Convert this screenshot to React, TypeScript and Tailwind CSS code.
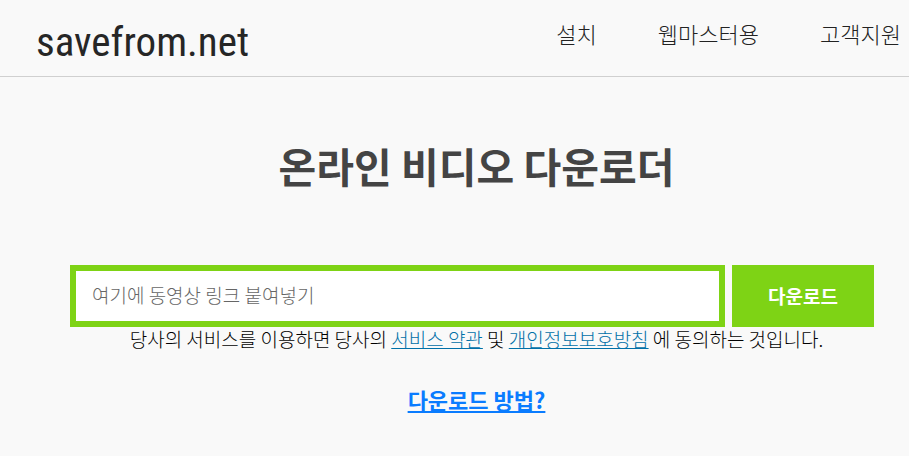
import { useState } from "react";

const menu = [
  { label: "설치", href: "#install" },
  { label: "웹마스터용", href: "#webmaster" },
  { label: "고객지원", href: "#support" },
];

function Header() {
  return (
    <header className="flex h-[77px] items-center justify-between border-b border-[#d0d0d0] pr-2 pl-9">
      <a
        href="#home"
        className="pt-2 font-['Roboto_Condensed','Liberation_Sans_Narrow',sans-serif] text-[41px] leading-none text-[#262626]"
      >
        savefrom.net
      </a>
      <nav className="flex gap-[61px] pb-2.5 text-[22px] leading-8 font-light text-[#222222]">
        {menu.map((item) => (
          <a key={item.href} href={item.href} className="whitespace-nowrap">
            {item.label}
          </a>
        ))}
      </nav>
    </header>
  );
}

export default function App() {
  const [url, setUrl] = useState("");

  return (
    <div className="min-h-screen bg-[#f9f9f9] font-['Noto_Sans_CJK_KR',sans-serif]">
      <Header />
      <main className="flex flex-col pt-14 pr-[26px] pl-[70px] text-center">
        <h1 className="text-[41px] leading-16 font-bold text-[#444444]">
          온라인 비디오 다운로더
        </h1>
        <form
          className="mt-[68px] mr-[9px] flex gap-[7px]"
          onSubmit={(e) => e.preventDefault()}
        >
          <input
            type="text"
            aria-label="여기에 동영상 링크 붙여넣기"
            placeholder="여기에 동영상 링크 붙여넣기"
            value={url}
            onChange={(e) => setUrl(e.target.value)}
            className="h-[62px] min-w-0 flex-1 border-6 border-[#7ed315] bg-white px-4 pb-1 text-[19px] font-light text-[#222222] outline-none placeholder:text-[#666666]"
          />
          <button
            type="submit"
            className="h-[62px] bg-[#7ed315] px-9 text-[19px] font-bold text-white"
          >
            다운로드
          </button>
        </form>
        <p className="text-[19px] leading-6 font-light text-black">
          당사의 서비스를 이용하면 당사의{" "}
          <a href="#terms" className="text-[#0070a8] underline">
            서비스 약관
          </a>{" "}
          및{" "}
          <a href="#privacy" className="text-[#0070a8] underline">
            개인정보보호방침
          </a>{" "}
          에 동의하는 것입니다.
        </p>
        <a
          href="#howto"
          className="mt-8 self-center text-[22px] leading-8 font-bold text-[#0a7cff] underline"
        >
          다운로드 방법?
        </a>
      </main>
    </div>
  );
}
